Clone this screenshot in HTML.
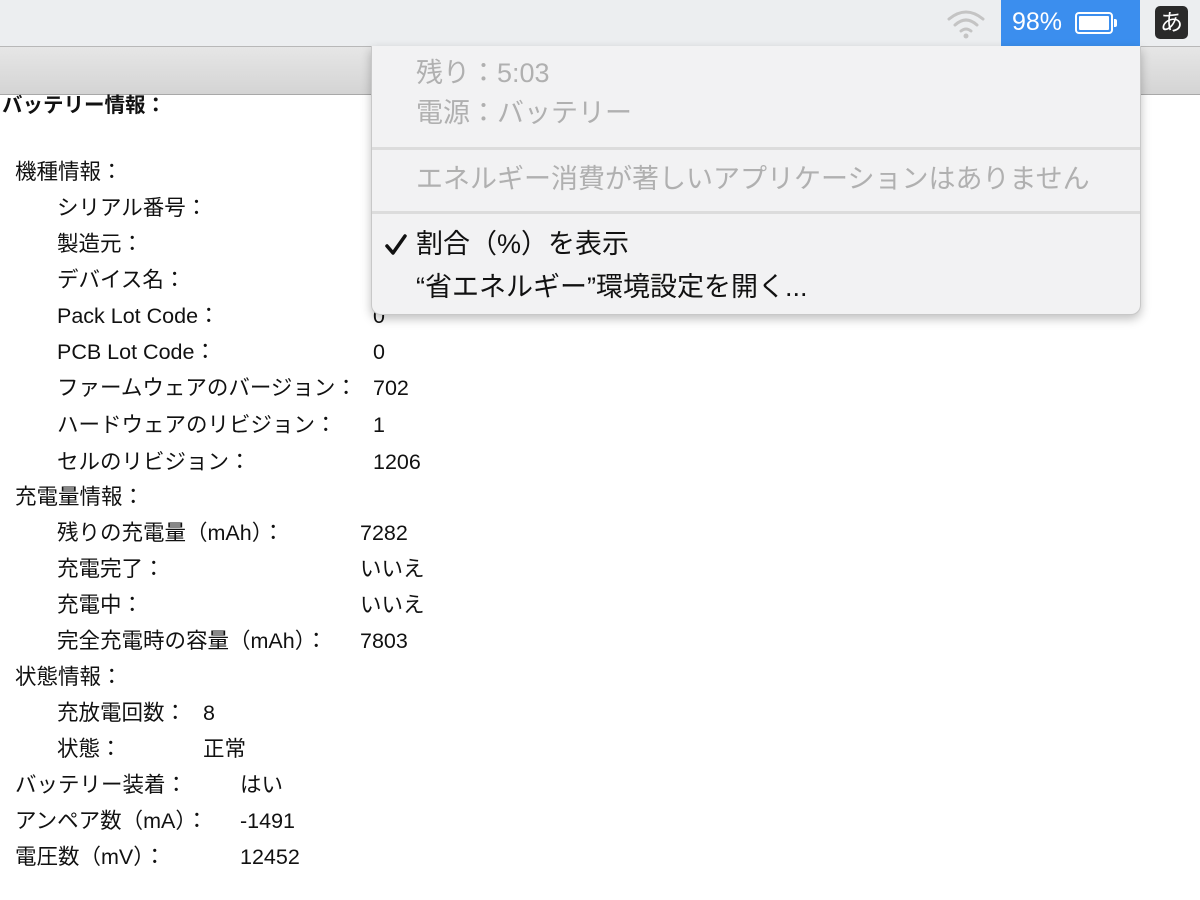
<!DOCTYPE html>
<html><head><meta charset="utf-8"><style>
body{margin:0;width:1200px;height:900px;overflow:hidden;background:#fff;font-family:"Liberation Sans","Noto Sans CJK JP",sans-serif;position:relative;color:#111}
.mb{position:absolute;left:0;top:0;width:1200px;height:46px;background:#eceef0;border-bottom:1px solid #b8b8b8}
.tb{position:absolute;left:0;top:47px;width:1200px;height:47px;background:linear-gradient(#e6e6e6,#d4d4d4);border-bottom:1px solid #a8a8a8}
.t{position:absolute;font-size:21.5px;white-space:nowrap;line-height:24px}
.menu{position:absolute;left:371px;top:46px;width:768px;height:268px;background:#f2f2f3;border:1px solid #c8c8c8;border-top:none;border-radius:0 0 10px 10px;box-shadow:0 4px 10px rgba(0,0,0,.25)}
.m{position:absolute;font-size:27px;white-space:nowrap;line-height:30px}
.g{color:#b0b0b0}
.sep{position:absolute;left:0;width:768px;height:3px;background:#dcdcdc}
</style></head><body>
<div class="mb"></div>
<div class="tb"></div>
<svg style="position:absolute;left:945px;top:7px" width="42" height="32" viewBox="0 0 42 32"><g fill="none" stroke="#c4c4c4" stroke-width="3" stroke-linecap="round"><path d="M4 12 Q21 -2 38 12"/><path d="M10 18 Q21 8 32 18"/><path d="M16 24 Q21 20 26 24"/></g><circle cx="21" cy="29" r="2.5" fill="#c4c4c4"/></svg>
<div style="position:absolute;left:1001px;top:0;width:139px;height:46px;background:#3b8eee"></div>
<div class="t" style="left:1012px;top:10px;color:#fff;font-size:25px">98%</div>
<div style="position:absolute;left:1075px;top:12px;width:38px;height:22px;border:2px solid #fff;border-radius:4px;box-sizing:border-box;padding:2px"><div style="background:#fff;width:100%;height:100%;border-radius:1px"></div></div>
<div style="position:absolute;left:1114px;top:19px;width:3px;height:8px;background:#fff;border-radius:0 2px 2px 0"></div>
<div style="position:absolute;left:1155px;top:6px;width:33px;height:33px;background:#2a2a2a;border-radius:5px;color:#fff;font-size:23px;text-align:center;line-height:33px">あ</div>

<div class="t" style="left:2px;top:94px;font-weight:bold;font-size:20.5px">バッテリー情報：</div>
<div class="t" style="left:15px;top:160px">機種情報：</div>
<div class="t" style="left:57px;top:196px">シリアル番号：</div>
<div class="t" style="left:57px;top:232px">製造元：</div>
<div class="t" style="left:57px;top:268px">デバイス名：</div>
<div class="t" style="left:57px;top:304px">Pack Lot Code：</div><div class="t" style="left:373px;top:304px">0</div>
<div class="t" style="left:57px;top:340px">PCB Lot Code：</div><div class="t" style="left:373px;top:340px">0</div>
<div class="t" style="left:57px;top:376px">ファームウェアのバージョン：</div><div class="t" style="left:373px;top:376px">702</div>
<div class="t" style="left:57px;top:413px">ハードウェアのリビジョン：</div><div class="t" style="left:373px;top:413px">1</div>
<div class="t" style="left:57px;top:450px">セルのリビジョン：</div><div class="t" style="left:373px;top:450px">1206</div>
<div class="t" style="left:15px;top:485px">充電量情報：</div>
<div class="t" style="left:57px;top:521px">残りの充電量（mAh）：</div><div class="t" style="left:360px;top:521px">7282</div>
<div class="t" style="left:57px;top:557px">充電完了：</div><div class="t" style="left:360px;top:557px">いいえ</div>
<div class="t" style="left:57px;top:593px">充電中：</div><div class="t" style="left:360px;top:593px">いいえ</div>
<div class="t" style="left:57px;top:629px">完全充電時の容量（mAh）：</div><div class="t" style="left:360px;top:629px">7803</div>
<div class="t" style="left:15px;top:665px">状態情報：</div>
<div class="t" style="left:57px;top:701px">充放電回数：</div><div class="t" style="left:203px;top:701px">8</div>
<div class="t" style="left:57px;top:737px">状態：</div><div class="t" style="left:203px;top:737px">正常</div>
<div class="t" style="left:15px;top:773px">バッテリー装着：</div><div class="t" style="left:240px;top:773px">はい</div>
<div class="t" style="left:15px;top:809px">アンペア数（mA）：</div><div class="t" style="left:240px;top:809px">-1491</div>
<div class="t" style="left:15px;top:845px">電圧数（mV）：</div><div class="t" style="left:240px;top:845px">12452</div>

<div class="menu">
<div class="m g" style="left:44px;top:12px">残り：5:03</div>
<div class="m g" style="left:44px;top:52px">電源：バッテリー</div>
<div class="sep" style="top:101px"></div>
<div class="m g" style="left:44px;top:118px">エネルギー消費が著しいアプリケーションはありません</div>
<div class="sep" style="top:165px"></div>
<svg style="position:absolute;left:12px;top:187px" width="24" height="24" viewBox="0 0 24 24"><path d="M3 13 L9 20 L21 3" fill="none" stroke="#111" stroke-width="3.5" stroke-linecap="round" stroke-linejoin="round"/></svg>
<div class="m" style="left:44px;top:183px">割合（%）を表示</div>
<div class="m" style="left:44px;top:226px">“省エネルギー”環境設定を開く...</div>
</div>
</body></html>
